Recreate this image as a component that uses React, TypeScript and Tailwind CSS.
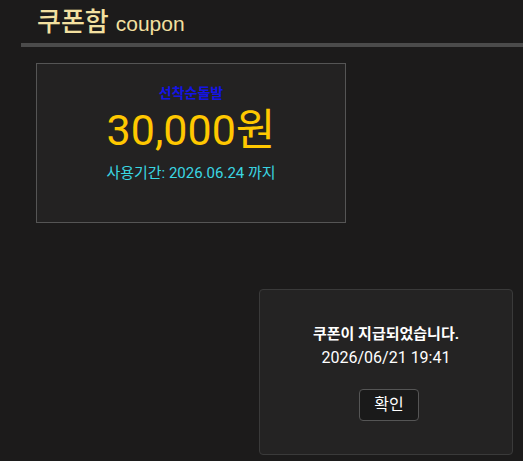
import React from "react";

export default function App() {
  return (
    <div
      className="relative w-full h-[461px] overflow-hidden bg-[#1c1b1b]"
      style={{ fontFamily: 'Roboto, "Noto Sans CJK KR", sans-serif' }}
    >
      <div className="pl-[37px] pt-[5px] h-[43px] flex items-baseline gap-[7px]">
        <span className="text-[26px] font-medium leading-[34px] text-[#f3e0a0]">쿠폰함</span>
        <span
          className="text-[21px] leading-[34px] text-[#f3e0a0]"
          style={{ fontFamily: '"Liberation Sans", Arial, sans-serif' }}
        >
          coupon
        </span>
      </div>
      <div className="ml-[21px] h-[4px] bg-[#4b4b4b]" />
      <div className="ml-[36px] mt-[16px] w-[310px] h-[160px] border border-[#555] bg-[#232222] flex flex-col items-center pt-[19px]">
        <div className="text-[14px] font-bold text-[#1414e6] leading-[20px]">선착순돌발</div>
        <div className="text-[43px] leading-[52px] text-[#ffc800] mt-[1px]">30,000원</div>
        <div className="text-[15px] leading-[22px] text-[#3ad6e2] mt-[6px]">사용기간: 2026.06.24 까지</div>
      </div>
      <div className="absolute left-[259px] top-[289px] w-[254px] h-[166px] rounded-[4px] border border-[#3a3a3a] bg-[#242323] flex flex-col items-center pt-[33px]">
        <div className="text-[15px] font-bold text-white leading-[23px]">쿠폰이 지급되었습니다.</div>
        <div className="text-[16px] text-white leading-[23px]">2026/06/21 19:41</div>
        <button className="mt-[20px] ml-[6px] w-[60px] h-[32px] rounded-[4px] border border-[#555] bg-[#1a1a1a] text-[16px] text-white">
          확인
        </button>
      </div>
    </div>
  );
}
